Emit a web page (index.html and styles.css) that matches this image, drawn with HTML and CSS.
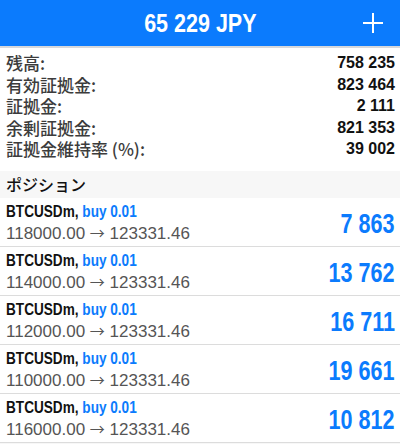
FILE: index.html
```html
<!doctype html>
<html>
<head>
<meta charset="UTF-8">
<title>取引</title>
<link rel="stylesheet" href="styles.css">
</head>
<body>
	<div class="topbar">
		<span></span>
		<h1 class="title">65 229 JPY</h1>
		<a class="add" href="javascript:void(0);">
			<svg width="20" height="20" viewBox="0 0 20 20"><path d="M10 0V20M0 10H20" stroke="#fff" stroke-width="2"/></svg>
		</a>
	</div>
	<ul class="summary">
		<li><span class="label">残高:</span><span class="val">758 235</span></li>
		<li><span class="label">有効証拠金:</span><span class="val">823 464</span></li>
		<li><span class="label">証拠金:</span><span class="val">2 111</span></li>
		<li><span class="label">余剰証拠金:</span><span class="val">821 353</span></li>
		<li><span class="label">証拠金維持率 (%):</span><span class="val">39 002</span></li>
	</ul>
	<div class="section">ポジション</div>
	<ul class="positions">
		<li>
			<div class="info">
				<div class="sym">BTCUSDm, <em>buy 0.01</em></div>
				<div class="price">118000.00 <span class="arrow">→</span> 123331.46</div>
			</div>
			<div class="profit">7 863</div>
		</li>
		<li>
			<div class="info">
				<div class="sym">BTCUSDm, <em>buy 0.01</em></div>
				<div class="price">114000.00 <span class="arrow">→</span> 123331.46</div>
			</div>
			<div class="profit">13 762</div>
		</li>
		<li>
			<div class="info">
				<div class="sym">BTCUSDm, <em>buy 0.01</em></div>
				<div class="price">112000.00 <span class="arrow">→</span> 123331.46</div>
			</div>
			<div class="profit">16 711</div>
		</li>
		<li>
			<div class="info">
				<div class="sym">BTCUSDm, <em>buy 0.01</em></div>
				<div class="price">110000.00 <span class="arrow">→</span> 123331.46</div>
			</div>
			<div class="profit">19 661</div>
		</li>
		<li>
			<div class="info">
				<div class="sym">BTCUSDm, <em>buy 0.01</em></div>
				<div class="price">116000.00 <span class="arrow">→</span> 123331.46</div>
			</div>
			<div class="profit">10 812</div>
		</li>
	</ul>
</body>
</html>
```

FILE: styles.css
```css
*{margin:0;padding:0;}
body{background:#f7f7f7;font-family:"Liberation Sans","Noto Sans CJK JP",sans-serif;color:#111;}
ul,li{list-style:none;}
a{text-decoration:none;}
/*topbar*/
.topbar{height:46px;background:#0b7bfd;border-bottom:2px solid #d6d8dc;display:grid;grid-template-columns:1fr auto 1fr;align-items:center;}
.topbar .title{display:inline-block;font-size:25px;font-weight:700;color:#fff;transform:scaleX(.86);line-height:46px;}
.topbar .add{justify-self:end;display:flex;margin-right:17px;}
/*summary*/
.summary{background:#fff;padding:4px 5px 11px 6px;}
.summary li{display:flex;justify-content:space-between;align-items:center;height:21.6px;line-height:21.6px;}
.summary .label{font-family:"Noto Sans CJK JP",sans-serif;font-size:17px;font-weight:500;color:#3c3c3c;}
.summary .val{font-size:16px;font-weight:700;color:#111;}
/*section*/
.section{height:27px;line-height:27px;padding-left:6px;font-family:"Noto Sans CJK JP",sans-serif;font-size:16px;font-weight:500;color:#111;}
/*positions*/
.positions{background:#fff;}
.positions li{display:flex;justify-content:space-between;align-items:center;border-bottom:1px solid #dcdcdc;padding:2px 5px 0 6px;box-sizing:border-box;height:49px;}
.positions .sym{font-size:17px;font-weight:700;line-height:21px;color:#111;transform:scaleX(.8);transform-origin:left;white-space:nowrap;}
.positions .sym em{font-style:normal;color:#0b7bfd;}
.positions .price{font-size:17px;line-height:22px;color:#555;white-space:nowrap;}
.positions .arrow{font-family:"Noto Sans CJK JP",sans-serif;font-size:15px;}
.positions .profit{margin-top:4px;font-size:27px;font-weight:700;color:#0b7bfd;transform:scaleX(.8);transform-origin:right;white-space:nowrap;}
```
